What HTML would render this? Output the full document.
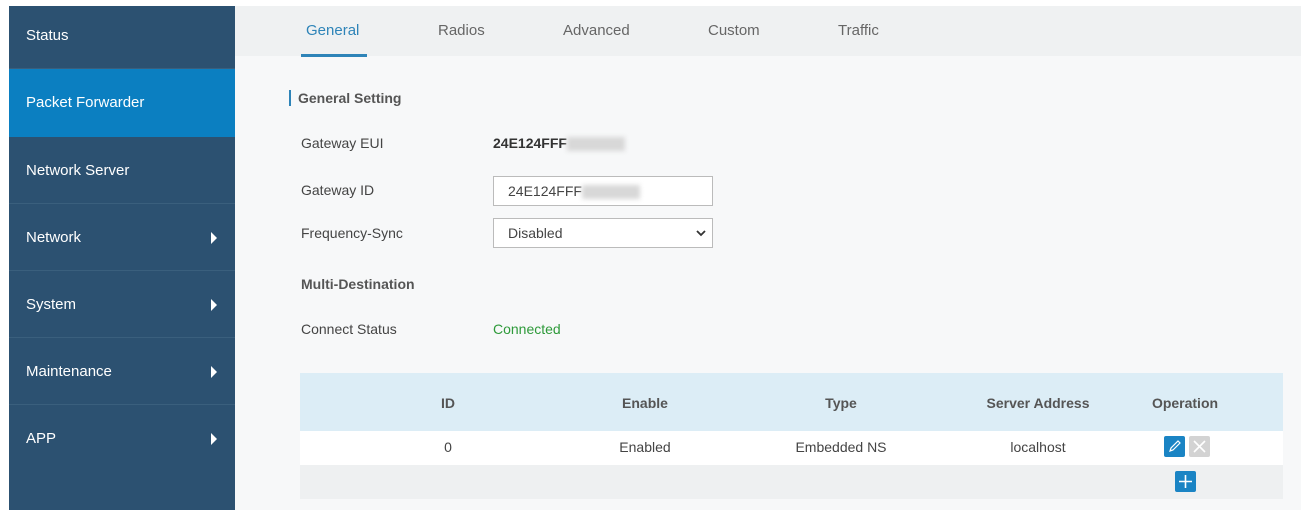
<!DOCTYPE html><html><head><style>
body{margin:0;width:1301px;height:513px;background:#fff;font-family:"Liberation Sans",sans-serif;position:relative;overflow:hidden;font-size:14px;color:#333}
.sb{position:absolute;left:9px;top:6px;width:226px;height:504px;background:#2c5171}
.it{position:absolute;left:0;width:226px;height:67px;color:#fff;font-size:15px;line-height:67px;padding-left:17px;box-sizing:border-box;border-bottom:1px solid #3a5f7d}
.it.a{background:#0b7fc1;border:none}
.ar{position:absolute;right:18px;top:28px;width:0;height:0;border-left:6px solid #fff;border-top:6px solid transparent;border-bottom:6px solid transparent}
.main{position:absolute;left:235px;top:6px;width:1066px;height:504px;background:#f7f8f9}
.tabs{position:absolute;left:0;top:0;width:1066px;height:50px;background:#eff1f2}
.tab{position:absolute;top:16px;font-size:15px;color:#666}
.t{position:absolute;font-size:14px;color:#444}
.in{position:absolute;left:493px;width:220px;height:30px;border:1px solid #bbb;background:#fff;box-sizing:border-box;font-size:14px;line-height:28px;padding-left:14px;color:#444}
.blur{display:inline-block;width:58px;height:14px;background:#d8d8d8;vertical-align:middle;filter:blur(2.5px)}
.th{position:absolute;top:395px;font-size:14px;font-weight:bold;color:#555;transform:translateX(-50%)}
.td{position:absolute;top:439px;font-size:14px;color:#444;transform:translateX(-50%)}
</style></head><body>
<div class="sb">
<div class="it" style="top:0;height:63px;line-height:60px">Status</div>
<div class="it a" style="top:63px;height:68px">Packet Forwarder</div>
<div class="it" style="top:131px">Network Server</div>
<div class="it" style="top:198px">Network<span class="ar"></span></div>
<div class="it" style="top:265px">System<span class="ar"></span></div>
<div class="it" style="top:332px">Maintenance<span class="ar"></span></div>
<div class="it" style="top:399px;border:none">APP<span class="ar"></span></div>
</div>
<div class="main"><div class="tabs">
<span class="tab" style="left:71px;color:#2e84b8">General</span>
<div style="position:absolute;left:66px;top:48px;width:66px;height:3px;background:#2e84b8"></div>
<span class="tab" style="left:203px">Radios</span>
<span class="tab" style="left:328px">Advanced</span>
<span class="tab" style="left:473px">Custom</span>
<span class="tab" style="left:603px">Traffic</span>
</div></div>
<div style="position:absolute;left:289px;top:90px;width:2px;height:16px;background:#2e84b8"></div>
<div class="t" style="left:298px;top:90px;font-weight:bold;color:#555">General Setting</div>
<div class="t" style="left:301px;top:135px">Gateway EUI</div>
<div class="t" style="left:493px;top:135px;font-weight:bold;color:#333">24E124FFF<span class="blur"></span></div>
<div class="t" style="left:301px;top:182px">Gateway ID</div>
<div class="in" style="top:176px">24E124FFF<span class="blur"></span></div>
<div class="t" style="left:301px;top:225px">Frequency-Sync</div>
<div class="in" style="top:218px">Disabled<svg style="position:absolute;right:6px;top:10px" width="10" height="8"><path d="M1 2l4 4 4-4" fill="none" stroke="#333" stroke-width="1.8"/></svg></div>
<div class="t" style="left:301px;top:276px;font-weight:bold;color:#555">Multi-Destination</div>
<div class="t" style="left:301px;top:321px">Connect Status</div>
<div class="t" style="left:493px;top:321px;color:#2e9a3a">Connected</div>
<div style="position:absolute;left:300px;top:373px;width:983px;height:58px;background:#dcedf6"></div>
<div style="position:absolute;left:300px;top:431px;width:983px;height:34px;background:#fff"></div>
<div style="position:absolute;left:300px;top:465px;width:983px;height:34px;background:#eef0f1"></div>
<div class="th" style="left:448px">ID</div><div class="th" style="left:645px">Enable</div><div class="th" style="left:841px">Type</div><div class="th" style="left:1038px">Server Address</div><div class="th" style="left:1185px">Operation</div>
<div class="td" style="left:448px">0</div><div class="td" style="left:645px">Enabled</div><div class="td" style="left:841px">Embedded NS</div><div class="td" style="left:1038px">localhost</div>
<svg style="position:absolute;left:1164px;top:436px" width="48" height="22"><rect x="0" y="0" width="21" height="21" rx="2" fill="#1a84c4"/><path d="M6 15l1-3 7-7 2 2-7 7z" fill="none" stroke="#fff" stroke-width="1.2"/><rect x="25" y="0" width="21" height="21" rx="2" fill="#d3d3d3"/><path d="M30 5l11 11M41 5l-11 11" stroke="#fff" stroke-width="1.6"/></svg>
<svg style="position:absolute;left:1175px;top:471px" width="22" height="22"><rect width="21" height="21" rx="2" fill="#1a84c4"/><path d="M10.5 4v13M4 10.5h13" stroke="#fff" stroke-width="1.6"/></svg>
</body></html>
